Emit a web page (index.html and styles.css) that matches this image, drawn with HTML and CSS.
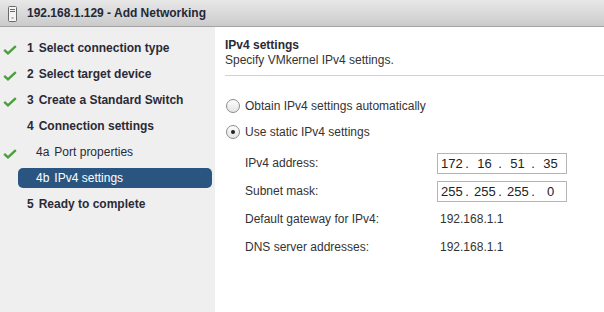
FILE: index.html
```html
<!DOCTYPE html>
<html lang="en">
<head>
    <meta charset="UTF-8">
    <title>Add Networking</title>
    <link rel="stylesheet" href="styles.css">
</head>
<body>
    <div class="titlebar">
        <svg class="host-icon" width="9" height="16" viewBox="0 0 9 16">
            <rect x="0.5" y="0.5" width="8" height="15" rx="1" fill="#f4f4f4" stroke="#6a6a6a"/>
            <line x1="2" y1="3.5" x2="7" y2="3.5" stroke="#6a6a6a"/>
            <line x1="2" y1="5.5" x2="7" y2="5.5" stroke="#6a6a6a"/>
            <rect x="3.5" y="11.5" width="2" height="1" fill="#6a6a6a"/>
        </svg>
        <span class="title">192.168.1.129 - Add Networking</span>
    </div>

    <div class="wizard">
        <!-- step list -->
        <div class="nav">
            <div class="step done">
                <span class="check"><svg width="14" height="10" viewBox="0 0 14 10"><path d="M1.2 4.8 L5 8.3 L12.8 1.2" fill="none" stroke="#4a9e3c" stroke-width="2.4"/></svg></span>
                <span class="step-text"><span class="num">1</span>Select connection type</span>
            </div>
            <div class="step done">
                <span class="check"><svg width="14" height="10" viewBox="0 0 14 10"><path d="M1.2 4.8 L5 8.3 L12.8 1.2" fill="none" stroke="#4a9e3c" stroke-width="2.4"/></svg></span>
                <span class="step-text"><span class="num">2</span>Select target device</span>
            </div>
            <div class="step done">
                <span class="check"><svg width="14" height="10" viewBox="0 0 14 10"><path d="M1.2 4.8 L5 8.3 L12.8 1.2" fill="none" stroke="#4a9e3c" stroke-width="2.4"/></svg></span>
                <span class="step-text"><span class="num">3</span>Create a Standard Switch</span>
            </div>
            <div class="step">
                <span class="check"></span>
                <span class="step-text"><span class="num">4</span>Connection settings</span>
            </div>
            <div class="step sub">
                <span class="check"><svg width="14" height="10" viewBox="0 0 14 10"><path d="M1.2 4.8 L5 8.3 L12.8 1.2" fill="none" stroke="#4a9e3c" stroke-width="2.4"/></svg></span>
                <span class="step-text"><span class="num">4a</span>Port properties</span>
            </div>
            <div class="step sub current">
                <span class="check"></span>
                <span class="step-text"><span class="num">4b</span>IPv4 settings</span>
            </div>
            <div class="step">
                <span class="check"></span>
                <span class="step-text"><span class="num">5</span>Ready to complete</span>
            </div>
        </div>

        <!-- page content -->
        <div class="content">
            <div class="page-title">IPv4 settings</div>
            <div class="page-desc">Specify VMkernel IPv4 settings.</div>
            <div class="separator"></div>

            <div class="options">
                <div class="option"><span class="radio"></span>Obtain IPv4 settings automatically</div>
                <div class="option"><span class="radio checked"></span>Use static IPv4 settings</div>
            </div>

            <div class="fields">
                <div class="label">IPv4 address:</div>
                <div class="ip-box">
                    <span class="octet">172</span><span class="dot">.</span>
                    <span class="octet">16</span><span class="dot">.</span>
                    <span class="octet">51</span><span class="dot">.</span>
                    <span class="octet">35</span>
                </div>

                <div class="label">Subnet mask:</div>
                <div class="ip-box">
                    <span class="octet">255</span><span class="dot">.</span>
                    <span class="octet">255</span><span class="dot">.</span>
                    <span class="octet">255</span><span class="dot">.</span>
                    <span class="octet">0</span>
                </div>

                <div class="label">Default gateway for IPv4:</div>
                <div class="value">192.168.1.1</div>

                <div class="label">DNS server addresses:</div>
                <div class="value">192.168.1.1</div>
            </div>
        </div>
    </div>
</body>
</html>
```

FILE: styles.css
```css
body {
    margin: 0;
    padding: 0;
    width: 604px;
    height: 312px;
    overflow: hidden;
    font-family: "Liberation Sans", Arial, sans-serif;
    font-size: 12px;
    color: #333;
    background-color: #fff;
}

/* Title bar */
.titlebar {
    height: 26px;
    border-bottom: 1px solid #a3a3a3;
    background: linear-gradient(#e8e8e8, #cbcbcb);
    display: flex;
    align-items: center;
    padding-left: 8px;
}

.host-icon {
    margin-top: 1px;
}

.title {
    margin-left: 10px;
    font-size: 12px;
    font-weight: bold;
    color: #252838;
}

.wizard {
    display: flex;
    height: 285px;
}

/* Step list */
.nav {
    width: 215px;
    background-color: #efefef;
    padding-top: 8px;
    box-sizing: border-box;
}

.step {
    display: flex;
    align-items: center;
    height: 26px;
    font-weight: bold;
    color: #2a2a36;
}

.step .check {
    width: 18px;
    padding-left: 3px;
    box-sizing: border-box;
    display: flex;
    align-items: center;
    margin-top: 3px;
}

.step-text {
    padding-left: 9px;
    white-space: nowrap;
}

.num {
    margin-right: 5px;
}

.step.sub {
    font-weight: normal;
}

.step.sub .step-text {
    padding-left: 18px;
}

.step.current .step-text {
    flex: 1;
    margin-right: 3px;
    height: 20px;
    line-height: 20px;
    border-radius: 5px;
    background-color: #2b5581;
    color: #fff;
}

/* Content */
.content {
    flex: 1;
    padding-top: 12px;
    padding-left: 10px;
}

.page-title {
    font-weight: bold;
    line-height: 12px;
    color: #2a2a36;
}

.page-desc {
    margin-top: 3px;
    line-height: 13px;
}

.separator {
    margin-top: 8px;
    border-top: 1px solid #d2d2d2;
}

.options {
    margin-top: 17px;
}

.option {
    display: flex;
    align-items: center;
    height: 26px;
}

.radio {
    width: 12px;
    height: 12px;
    border: 1px solid #8c8c8c;
    border-radius: 50%;
    background: linear-gradient(#fdfdfd, #e4e4e4);
    margin-left: 1px;
    margin-right: 5px;
    position: relative;
}

.radio.checked::after {
    content: "";
    position: absolute;
    left: 4px;
    top: 4px;
    width: 4px;
    height: 4px;
    border-radius: 50%;
    background-color: #222;
}

.fields {
    margin-top: 4px;
    margin-left: 20px;
    display: grid;
    grid-template-columns: 192px 130px;
    grid-auto-rows: 28px;
    align-items: center;
}

.ip-box {
    height: 19px;
    border: 1px solid #b5b5b5;
    padding-left: 3px;
    display: flex;
    align-items: center;
    font-size: 13px;
    color: #222;
}

.octet {
    width: 21px;
    text-align: center;
}

.dot {
    width: 12px;
    text-align: center;
    padding-right: 2px;
    box-sizing: border-box;
}

.value {
    padding-left: 3px;
}
```
